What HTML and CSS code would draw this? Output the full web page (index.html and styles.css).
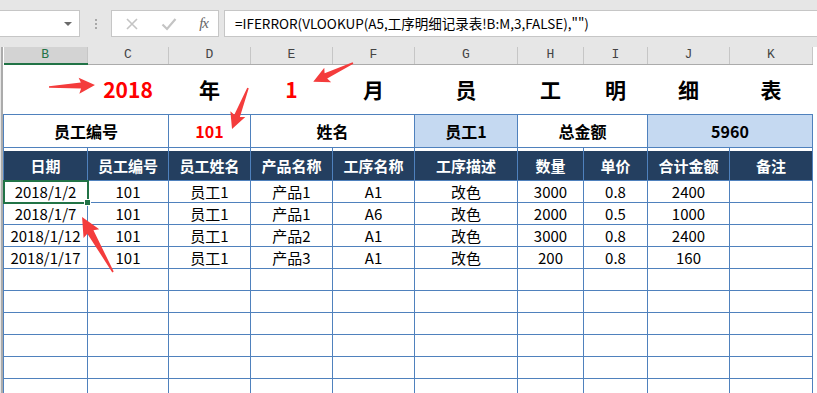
FILE: index.html
```html
<!DOCTYPE html>
<html lang="zh-CN">
<head>
    <meta charset="UTF-8">
    <title>员工明细表</title>
    <link rel="stylesheet" href="styles.css">
</head>
<body>
    <!-- 编辑栏 -->
    <div class="toolbar">
        <div class="namebox"><span class="drop"></span></div>
        <div class="grip"><i></i><i></i><i></i></div>
        <div class="fxbox">
            <svg width="14" height="14" viewBox="0 0 14 14"><path d="M2 2 L12 12 M12 2 L2 12" stroke="#c4c4c4" stroke-width="1.6" fill="none"/></svg>
            <svg width="16" height="14" viewBox="0 0 16 14"><path d="M1.5 7.5 L6 12 L14.5 2" stroke="#c4c4c4" stroke-width="2.2" fill="none"/></svg>
            <span class="fx">fx</span>
        </div>
        <div class="formula">=IFERROR(VLOOKUP(A5,工序明细记录表!B:M,3,FALSE),"")</div>
    </div>

    <!-- 工作表 -->
    <div class="sheet">
        <div class="rowhead"></div>
        <table class="grid">
            <colgroup>
                <col style="width:84px"><col style="width:81px"><col style="width:82px"><col style="width:82px"><col style="width:82px">
                <col style="width:103px"><col style="width:66px"><col style="width:64px"><col style="width:82px"><col style="width:83px">
            </colgroup>
            <tr class="cols">
                <th class="on">B</th><th>C</th><th>D</th><th>E</th><th>F</th><th>G</th><th>H</th><th>I</th><th>J</th><th>K</th>
            </tr>
            <tr class="title">
                <td></td><td class="red">2018</td><td>年</td><td class="red">1</td><td>月</td>
                <td>员</td><td>工</td><td>明</td><td>细</td><td>表</td>
            </tr>
            <tr class="info">
                <td colspan="2">员工编号</td>
                <td class="red">101</td>
                <td colspan="2">姓名</td>
                <td class="fill">员工1</td>
                <td colspan="2">总金额</td>
                <td colspan="2" class="fill">5960</td>
            </tr>
            <tr class="gap">
                <td></td><td></td><td></td><td></td><td></td><td></td><td></td><td></td><td></td><td></td>
            </tr>
            <tr class="head">
                <td>日期</td><td>员工编号</td><td>员工姓名</td><td>产品名称</td><td>工序名称</td>
                <td>工序描述</td><td>数量</td><td>单价</td><td>合计金额</td><td>备注</td>
            </tr>
            <tr class="row">
                <td class="sel">2018/1/2</td><td>101</td><td>员工1</td><td>产品1</td><td>A1</td>
                <td>改色</td><td>3000</td><td>0.8</td><td>2400</td><td></td>
            </tr>
            <tr class="row">
                <td>2018/1/7</td><td>101</td><td>员工1</td><td>产品1</td><td>A6</td>
                <td>改色</td><td>2000</td><td>0.5</td><td>1000</td><td></td>
            </tr>
            <tr class="row">
                <td>2018/1/12</td><td>101</td><td>员工1</td><td>产品2</td><td>A1</td>
                <td>改色</td><td>3000</td><td>0.8</td><td>2400</td><td></td>
            </tr>
            <tr class="row">
                <td>2018/1/17</td><td>101</td><td>员工1</td><td>产品3</td><td>A1</td>
                <td>改色</td><td>200</td><td>0.8</td><td>160</td><td></td>
            </tr>
            <tr class="row"><td></td><td></td><td></td><td></td><td></td><td></td><td></td><td></td><td></td><td></td></tr>
            <tr class="row"><td></td><td></td><td></td><td></td><td></td><td></td><td></td><td></td><td></td><td></td></tr>
            <tr class="row"><td></td><td></td><td></td><td></td><td></td><td></td><td></td><td></td><td></td><td></td></tr>
            <tr class="row"><td></td><td></td><td></td><td></td><td></td><td></td><td></td><td></td><td></td><td></td></tr>
            <tr class="row"><td></td><td></td><td></td><td></td><td></td><td></td><td></td><td></td><td></td><td></td></tr>
            <tr class="row"><td></td><td></td><td></td><td></td><td></td><td></td><td></td><td></td><td></td><td></td></tr>
        </table>
    </div>

    <!-- 标注箭头 -->
    <svg class="marks" width="817" height="393" viewBox="0 0 817 393">
        <g fill="#f43c3c">
            <polygon transform="translate(49,87) rotate(-2.5)" points="0,-0.8 32,-3 30,-8 46,0 30,8 32,3 0,0.8"/>
            <polygon transform="translate(353,63) rotate(154.6)" points="0,-0.8 30,-3 28,-8 44,0 28,8 30,3 0,0.8"/>
            <polygon transform="translate(248,88) rotate(111.3)" points="0,-0.8 30,-3 28,-8 44,0 28,8 30,3 0,0.8"/>
            <polygon transform="translate(113,272) rotate(-119.4)" points="0,-0.8 46,-3.5 44,-9 63,0 44,9 46,3.5 0,0.8"/>
        </g>
    </svg>
</body>
</html>
```

FILE: styles.css
```css
body { margin: 0; width: 817px; height: 393px; overflow: hidden; position: relative; background: #e6e6e6; font-family: "Noto Sans CJK SC", "Liberation Sans", sans-serif; color: #000; }

/* 编辑栏 */
.toolbar { height: 47px; box-sizing: border-box; padding-top: 10px; display: flex; align-items: flex-start; }
.namebox { width: 81px; height: 27px; margin-left: -1px; box-sizing: border-box; background: #fff; border: 1px solid #c6c6c6; display: flex; align-items: center; justify-content: flex-end; padding-right: 7px; }
.drop { width: 0; height: 0; border-left: 4px solid transparent; border-right: 4px solid transparent; border-top: 4px solid #6a6a6a; }
.grip { width: 31px; height: 27px; display: flex; flex-direction: column; align-items: center; justify-content: center; gap: 2px; }
.grip i { width: 2px; height: 2px; background: #a8a8a8; }
.fxbox { width: 108px; height: 27px; box-sizing: border-box; background: #fff; border: 1px solid #c6c6c6; display: flex; align-items: center; justify-content: space-between; padding: 0 10px 0 13px; }
.fx { font-family: "Liberation Serif", serif; font-style: italic; font-size: 15px; color: #666; letter-spacing: -1px; }
.formula { flex: 1; height: 27px; margin-left: 5px; margin-right: -2px; box-sizing: border-box; background: #fff; border: 1px solid #c6c6c6; padding-left: 10px; font-size: 13.5px; line-height: 24px; white-space: nowrap; }

/* 工作表 */
.sheet { display: flex; background: #fff; height: 346px; }
.rowhead { width: 1px; flex: none; background: #e6e6e6; border-right: 2px solid #ababab; }
.grid { border-collapse: collapse; table-layout: fixed; width: 809px; }
.grid td { padding: 0; text-align: center; white-space: nowrap; overflow: hidden; }

.cols th { height: 16px; padding: 0; background: #e6e6e6; border-right: 1px solid #c6c6c6; border-bottom: 1px solid #ababab; font-family: "Liberation Mono", monospace; font-weight: normal; font-size: 13px; color: #444; line-height: 16px; }
.cols th.on { background: #d3d3d3; color: #217346; border-bottom: 2px solid #217346; }

.title td { height: 49px; font-size: 21px; font-weight: bold; border-bottom: 1px solid #4f81bd; }
.red { color: #f00; }

.info td { height: 32px; font-size: 16px; font-weight: bold; border: 1px solid #4f81bd; }
.info .fill { background: #c5d9f1; }

.gap td { height: 3px; border-left: 1px solid #4f81bd; border-right: 1px solid #4f81bd; }

.head td { height: 29px; background: #243f60; color: #fff; font-size: 15px; font-weight: bold; border: 1px solid #4f81bd; border-top: none; }

.row td { height: 21px; font-size: 15px; line-height: 20px; border: 1px solid #4f81bd; }
.row td.sel { position: relative; outline: 2px solid #217346; outline-offset: -1px; overflow: visible; }
.row td.sel::after { content: ""; position: absolute; right: -4px; bottom: -4px; width: 5px; height: 5px; background: #217346; border: 1px solid #fff; }

.marks { position: absolute; top: 0; left: 0; pointer-events: none; }
```
